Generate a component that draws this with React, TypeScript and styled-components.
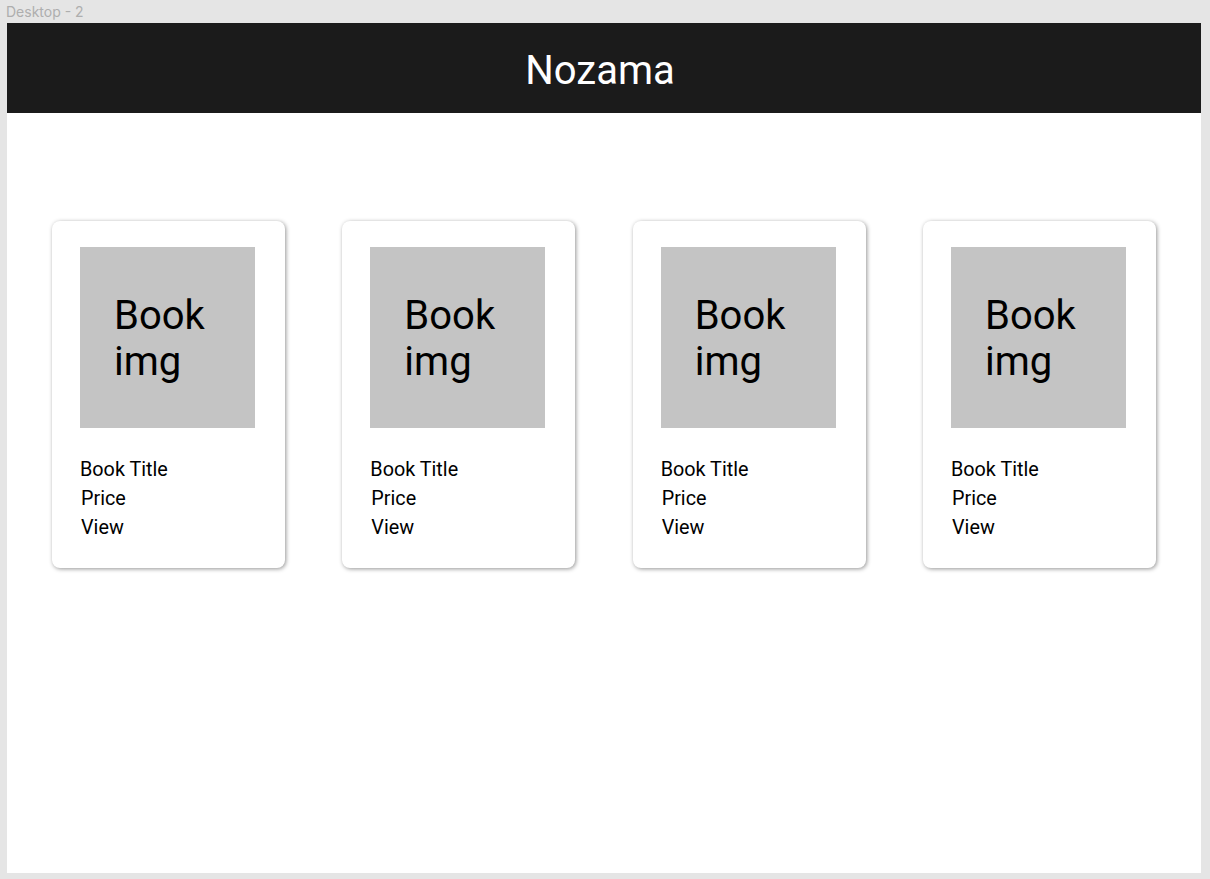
import React from "react";
import styled, { createGlobalStyle } from "styled-components";

const GlobalStyle = createGlobalStyle`
  html, body {
    margin: 0;
    padding: 0;
    background: #e5e5e5;
    font-family: Roboto, "Liberation Sans", Arial, sans-serif;
  }
  * { box-sizing: border-box; }
`;

const Canvas = styled.div`
  width: 1210px;
  height: 879px;
  background: #e5e5e5;
  overflow: hidden;
`;

const FrameLabel = styled.div`
  height: 23px;
  padding: 3px 0 0 6px;
  font-family: Inter, Roboto, "Liberation Sans", sans-serif;
  font-size: 14px;
  line-height: 17px;
  color: #aeaeae;
`;

const Frame = styled.div`
  margin-left: 7px;
  width: 1194px;
  height: 850px;
  background: #ffffff;
  display: flex;
  flex-direction: column;
`;

const Header = styled.header`
  height: 90px;
  background: #1b1b1b;
  display: flex;
  align-items: flex-start;
  justify-content: center;
  padding-top: 24px;
  padding-right: 8px;
`;

const Brand = styled.h1`
  margin: 0;
  font-family: Roboto, "Liberation Sans", sans-serif;
  font-weight: 400;
  font-size: 40px;
  line-height: 47px;
  color: #ffffff;
`;

const CardRow = styled.main`
  display: flex;
  justify-content: space-between;
  padding: 108px 45px 0 45px;
`;

const Card = styled.article`
  width: 233px;
  height: 347px;
  background: #ffffff;
  border-radius: 8px;
  box-shadow: 1px 1px 4px rgba(0, 0, 0, 0.42);
  padding: 26px 28px;
  display: flex;
  flex-direction: column;
`;

const Cover = styled.div`
  width: 175px;
  height: 181px;
  background: #c4c4c4;
  padding: 46px 0 0 34px;
  font-family: Roboto, "Liberation Sans", sans-serif;
  font-size: 40px;
  line-height: 46px;
  color: #000000;
`;

const Info = styled.div`
  margin-top: 27px;
  display: flex;
  flex-direction: column;
`;

const InfoLine = styled.div<{ $indent?: number }>`
  font-family: Roboto, "Liberation Sans", sans-serif;
  font-size: 19.8px;
  line-height: 29px;
  color: #000000;
  padding-left: ${(p) => p.$indent ?? 0}px;
`;

const books = [0, 1, 2, 3];

export default function App() {
  return (
    <>
      <GlobalStyle />
      <Canvas>
        <FrameLabel>Desktop - 2</FrameLabel>
        <Frame>
          <Header>
            <Brand>Nozama</Brand>
          </Header>
          <CardRow>
            {books.map((i) => (
              <Card key={i}>
                <Cover>
                  Book
                  <br />
                  img
                </Cover>
                <Info>
                  <InfoLine>Book Title</InfoLine>
                  <InfoLine $indent={1}>Price</InfoLine>
                  <InfoLine $indent={1}>View</InfoLine>
                </Info>
              </Card>
            ))}
          </CardRow>
        </Frame>
      </Canvas>
    </>
  );
}
